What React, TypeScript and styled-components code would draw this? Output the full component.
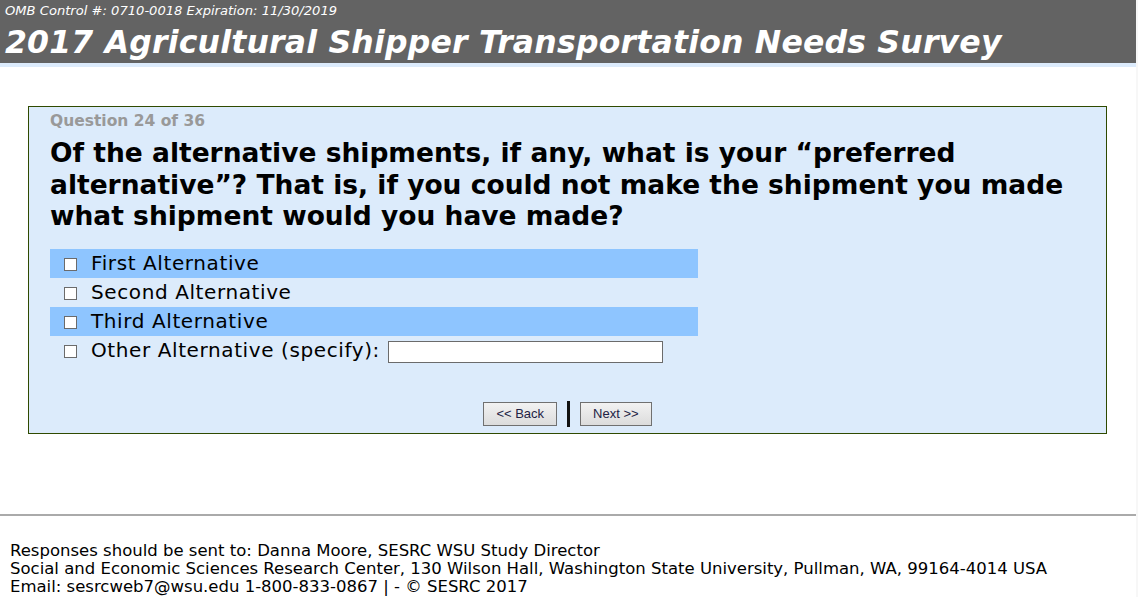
import React from 'react';
import styled, { createGlobalStyle } from 'styled-components';

const GlobalStyle = createGlobalStyle`
html {
  background: #f7f7f7;
}
body {
  margin: 0;
  margin-right: 2px;
  background: #ffffff;
  font-family: "DejaVu Sans", Verdana, sans-serif;
  color: #000;
}
`;

const options = [
  { label: 'First Alternative', shaded: true },
  { label: 'Second Alternative', shaded: false },
  { label: 'Third Alternative', shaded: true },
  { label: 'Other Alternative (specify):', shaded: false, specify: true },
];

const App: React.FC = () => {
  return (
    <Page>
      <GlobalStyle />
      <Header>
        <Omb>OMB Control #: 0710-0018 Expiration: 11/30/2019</Omb>
        <Title>2017 Agricultural Shipper Transportation Needs Survey</Title>
      </Header>
      <HeaderStripe />
      <Main>
        <QuestionPanel>
          <Counter>Question 24 of 36</Counter>
          <QuestionText>
            Of the alternative shipments, if any, what is your “preferred alternative”? That is, if you
            could not make the shipment you made what shipment would you have made?
          </QuestionText>
          <OptionList>
            {options.map((o) => (
              <OptionRow key={o.label} $shaded={o.shaded}>
                <Box />
                <OptionLabel>{o.label}</OptionLabel>
                {o.specify && <SpecifyInput type="text" />}
              </OptionRow>
            ))}
          </OptionList>
          <NavBar>
            <NavButton>&lt;&lt; Back</NavButton>
            <Divider />
            <NavButton>Next &gt;&gt;</NavButton>
          </NavBar>
        </QuestionPanel>
      </Main>
      <Footer>
        <FooterText>
          Responses should be sent to: Danna Moore, SESRC WSU Study Director
          <br />
          Social and Economic Sciences Research Center, 130 Wilson Hall, Washington State University, Pullman, WA, 99164-4014 USA
          <br />
          Email: sesrcweb7@wsu.edu 1-800-833-0867 | - © SESRC 2017
        </FooterText>
      </Footer>
    </Page>
  );
};

const Page = styled.div`
display: flex;
flex-direction: column;
height: 597px;
overflow: hidden;
`;

const Header = styled.div`
background-color: #636363;
color: #ffffff;
height: 63px;
flex-shrink: 0;
padding: 3px 0 0 5px;
box-sizing: border-box;
`;

const Omb = styled.div`
font-style: italic;
font-size: 13.1px;
line-height: 15px;
`;

const Title = styled.h1`
margin: 4px 0 0 0;
font-style: italic;
font-weight: bold;
font-size: 31.5px;
line-height: 40px;
letter-spacing: 0.2px;
`;

const HeaderStripe = styled.div`
height: 4px;
flex-shrink: 0;
background-color: #dcebfc;
`;

const Main = styled.div`
padding: 39px 29px 0 28px;
height: 443px;
flex-shrink: 0;
box-sizing: border-box;
`;

const QuestionPanel = styled.div`
background-color: #dcebfb;
border: 1px solid #2f4a00;
padding: 5px 21px 6px 21px;
display: flex;
flex-direction: column;
`;

const Counter = styled.div`
color: #999999;
font-weight: bold;
font-size: 15.5px;
line-height: 19px;
`;

const QuestionText = styled.div`
font-weight: bold;
font-size: 26.5px;
line-height: 31.5px;
margin-top: 6px;
width: 1036px;
`;

const OptionList = styled.div`
margin-top: 17px;
width: 648px;
display: flex;
flex-direction: column;
`;

const OptionRow = styled.div<{ $shaded: boolean }>`
display: flex;
align-items: center;
height: 29px;
background-color: ${(p) => (p.$shaded ? '#8ec5ff' : 'transparent')};
padding-left: 14px;
`;

const Box = styled.span`
width: 11px;
height: 11px;
border: 1px solid #6b6b6b;
background-color: #ffffff;
margin-top: 3px;
`;

const OptionLabel = styled.span`
font-size: 20px;
letter-spacing: 0.6px;
margin-left: 14px;
margin-right: 8px;
`;

const SpecifyInput = styled.input`
width: 275px;
height: 22px;
box-sizing: border-box;
border: 1px solid #6b6b6b;
background: #ffffff;
margin: 4px 0 0 0;
padding: 0;
outline: none;
`;

const NavBar = styled.div`
display: flex;
justify-content: center;
align-items: center;
gap: 10px;
margin-top: 36px;
`;

const NavButton = styled.button`
font-family: "Liberation Sans", Arial, sans-serif;
font-size: 13px;
color: #222244;
height: 24px;
padding: 0 12px;
border: 1px solid #707070;
background: linear-gradient(#f2f2f2, #dcdcdc);
`;

const Divider = styled.span`
width: 3px;
height: 26px;
background-color: #111111;
`;

const Footer = styled.div`
margin-top: 4px;
border-top: 2px solid #aaaaaa;
padding: 26px 10px 0 10px;
`;

const FooterText = styled.div`
font-size: 16.5px;
line-height: 18px;
`;

export default App;
